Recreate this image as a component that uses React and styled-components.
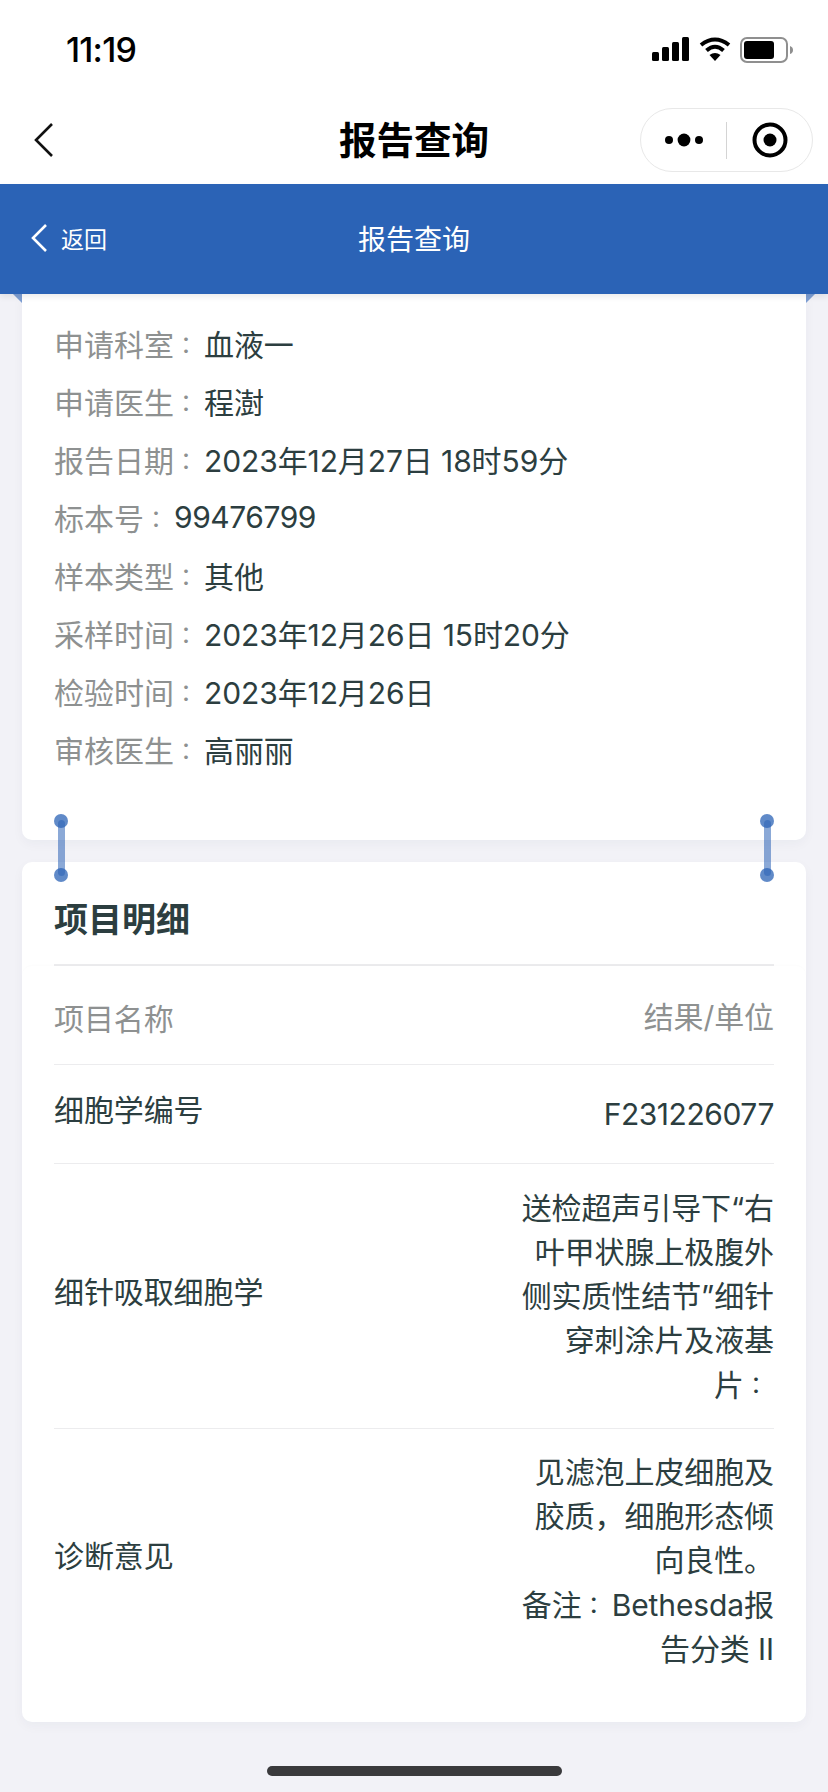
import React from "react";
import styled, { createGlobalStyle } from "styled-components";

const Global = createGlobalStyle`
  html, body { margin: 0; padding: 0; background: #f2f2f7; }
  * { box-sizing: border-box; }
  body { font-family: "Inter", "Noto Sans CJK SC", sans-serif; }
`;
const Page = styled.div`
  width: 828px; height: 1792px; overflow: hidden; position: relative;
  background: #f2f2f7; display: flex; flex-direction: column;
`;
const StatusBar = styled.div`
  height: 92px; background: #fff; display: flex; align-items: flex-start;
  justify-content: space-between; padding: 29px 34px 0 66px;
`;
const Time = styled.div`
  font: 500 34px/41px "Inter", sans-serif; color: #000; letter-spacing: -0.8px;
`;
const StatusIcons = styled.div` display: flex; align-items: flex-start; gap: 9px; padding-top: 8px; `;
const NavBar = styled.div`
  height: 92px; background: #fff; display: flex; align-items: center; justify-content: center; position: relative;
`;
const NavBack = styled.svg` position: absolute; left: 34px; top: 31px; `;
const NavTitle = styled.div`
  font: 700 37.5px/44px "Noto Sans CJK SC", sans-serif; color: #000;
`;
const Capsule = styled.div`
  position: absolute; left: 640px; top: 16px; width: 173px; height: 64px;
  display: flex; align-items: center; border: 1px solid #e8e8e8; border-radius: 32px; background: #fff;
`;
const CapsuleSide = styled.div` flex: 1; display: flex; align-items: center; justify-content: center; `;
const CapsuleDivider = styled.div` width: 1px; height: 37px; background: #d4d4d4; `;
const BlueBar = styled.div`
  height: 110px; background: #2b63b6; display: flex; align-items: center; justify-content: center;
  position: relative; z-index: 2; color: #fff; box-shadow: 0 3px 6px rgba(0,0,0,.08);
`;
const BackLink = styled.div`
  position: absolute; left: 31px; top: 0; bottom: 2px; display: flex; align-items: center; gap: 14px;
  font: 400 23px/30px "Noto Sans CJK SC", sans-serif;
`;
const BlueTitle = styled.div` font: 400 28px/36px "Noto Sans CJK SC", sans-serif; margin-bottom: 2px; `;
const Content = styled.div`
  padding: 0 22px; display: flex; flex-direction: column; gap: 22px; position: relative; flex: 1;
`;
const Card = styled.div`
  background: #fff; border-radius: ${p => p.$top ? "0 0 10px 10px" : "10px"};
  box-shadow: 0 4px 12px rgba(30,40,80,.04); position: relative;
  height: ${p => p.$h}px;
`;
const InfoList = styled.div` padding: 20px 32px 0; display: flex; flex-direction: column; `;
const InfoRow = styled.div`
  height: 58px; display: flex; align-items: center; font-size: 30px; letter-spacing: -0.1px; color: #2c3e40;
`;
const InfoLabel = styled.span` color: #8e9191; letter-spacing: 0; `;
const Colon = styled.span`
  font-family: "Noto Sans CJK TC", sans-serif; font-size: 24px; letter-spacing: 0; width: 30px;
  display: inline-block; text-align: left; vertical-align: 2px;
`;
const Digits = styled.span` letter-spacing: -0.45px; `;
const NoBreak = styled.span` white-space: nowrap; `;
const CornerTri = styled.div`
  position: absolute; top: 0; width: 9px; height: 9px; background: #7d9ed3;
  ${p => p.$right ? "left: 784px; clip-path: polygon(0 0, 100% 0, 0 100%);" : "left: -9px; clip-path: polygon(0 0, 100% 0, 100% 100%);"}
`;
const Connector = styled.div`
  position: absolute; top: 520px; width: 14px; height: 68px; z-index: 3;
  ${p => p.$right ? "right: 54px;" : "left: 54px;"}
  &::before { content: ""; position: absolute; left: 3.5px; top: 6px; width: 7px; height: 56px; border-radius: 3.5px; background: rgba(43,99,182,.55); }
`;
const Dot = styled.span`
  position: absolute; left: 0; ${p => p.$bottom ? "bottom: 0;" : "top: 0;"}
  width: 14px; height: 14px; border-radius: 50%; background: rgba(43,99,182,.75);
`;
const DetailHead = styled.div`
  margin: 0 32px; height: 104px; padding-top: 33px; border-bottom: 2px solid #ececee;
  font: 700 34px/46px "Noto Sans CJK SC", sans-serif; color: #2c3e40;
`;
const DetailBody = styled.div`
  border-radius: 10px; background: #fff; box-shadow: 0 -1px 2px rgba(30,40,80,.015);
`;
const DetailRow = styled.div`
  margin: 0 32px; display: flex; justify-content: space-between; align-items: center;
  min-height: ${p => p.$h}px; padding-top: ${p => p.$muted ? "4px" : "0"};
  border-bottom: ${p => p.$last ? "none" : "1px solid #ececee"};
  font-size: 30px; letter-spacing: -0.1px; color: ${p => p.$muted ? "#8e9191" : "#2c3e40"};
`;
const Name = styled.div` flex: none; margin-bottom: ${p => p.$lift ? 12 : 0}px; `;
const Value = styled.div` width: 260px; text-align: right; line-height: 44px; `;
const HomeBar = styled.div`
  position: absolute; left: 267px; top: 1766px; width: 295px; height: 10px; border-radius: 5px; background: #3a3a3c; z-index: 4;
`;

const Info = [
  ["申请科室", "血液一"], ["申请医生", "程澍"], ["报告日期", "2023年12月27日 18时59分"],
  ["标本号", "99476799"], ["样本类型", "其他"], ["采样时间", "2023年12月26日 15时20分"],
  ["检验时间", "2023年12月26日"], ["审核医生", "高丽丽"],
];

export default function App() {
  return (
    <Page>
      <Global />
      <StatusBar>
        <Time>11:19</Time>
        <StatusIcons>
          <svg width="38" height="24" viewBox="0 0 38 24">
            <rect x="0" y="15" width="7" height="9" rx="1.5" /><rect x="10" y="10" width="7" height="14" rx="1.5" />
            <rect x="20" y="5" width="7" height="19" rx="1.5" /><rect x="30" y="0" width="7" height="24" rx="1.5" />
          </svg>
          <svg width="32" height="24" viewBox="0 0 32 24" fill="none" stroke="#000" strokeWidth="4">
            <path d="M2 8 Q16 -3 30 8" /><path d="M7.5 13.5 Q16 6 24.5 13.5" />
            <path d="M16 24 L10.5 18 Q16 14 21.5 18 Z" fill="#000" stroke="none" />
          </svg>
          <svg width="54" height="26" viewBox="0 0 54 26">
            <rect x="1" y="1" width="46" height="24" rx="6" fill="none" stroke="#8f8f8f" strokeWidth="2" />
            <rect x="4" y="4" width="30" height="18" rx="3" fill="#000" />
            <path d="M50 9 Q53 10 53 13 Q53 16 50 17 Z" fill="#8f8f8f" />
          </svg>
        </StatusIcons>
      </StatusBar>
      <NavBar>
        <NavBack width="19" height="34" viewBox="0 0 19 34" fill="none" stroke="#111" strokeWidth="2.6">
          <path d="M18 1 L2 17 L18 33" />
        </NavBack>
        <NavTitle>报告查询</NavTitle>
        <Capsule>
          <CapsuleSide>
            <svg width="38" height="14" viewBox="0 0 38 14">
              <circle cx="4" cy="7" r="4" /><circle cx="19" cy="7" r="6.4" /><circle cx="34" cy="7" r="4" />
            </svg>
          </CapsuleSide>
          <CapsuleDivider />
          <CapsuleSide>
            <svg width="36" height="36" viewBox="0 0 36 36">
              <circle cx="18" cy="18" r="15.5" fill="none" stroke="#000" strokeWidth="4" /><circle cx="18" cy="18" r="6.5" />
            </svg>
          </CapsuleSide>
        </Capsule>
      </NavBar>
      <BlueBar>
        <BackLink>
          <svg width="16" height="28" viewBox="0 0 16 28" fill="none" stroke="#fff" strokeWidth="2.6"><path d="M15 1 L2 14 L15 27" /></svg>
          返回
        </BackLink>
        <BlueTitle>报告查询</BlueTitle>
      </BlueBar>
      <Content>
        <Card $top $h={546}>
          <CornerTri />
          <CornerTri $right />
          <InfoList>
            {Info.map(([l, v]) => (
              <InfoRow key={l}>
                <InfoLabel>{l}<Colon>：</Colon></InfoLabel>
                {/^\d+$/.test(v) ? <Digits>{v}</Digits> : v}
              </InfoRow>
            ))}
          </InfoList>
        </Card>
        <Connector><Dot /><Dot $bottom /></Connector>
        <Connector $right><Dot /><Dot $bottom /></Connector>
        <Card $h={860}>
          <DetailHead>项目明细</DetailHead>
          <DetailBody>
            <DetailRow $muted $h={99}><Name>项目名称</Name><Value>结果/单位</Value></DetailRow>
            <DetailRow $h={99}><Name $lift>细胞学编号</Name><Value><Digits>F231226077</Digits></Value></DetailRow>
            <DetailRow $h={265}><Name $lift>细针吸取细胞学</Name><Value>送检超声引导下“右叶甲状腺上极腹外侧实质性结节”细针穿刺涂片及液基<NoBreak>片<Colon>：</Colon></NoBreak></Value></DetailRow>
            <DetailRow $last $h={262}><Name $lift>诊断意见</Name><Value>见滤泡上皮细胞及胶质，细胞形态倾向良性。<br />备注<Colon>：</Colon>Bethesda报告分类 II</Value></DetailRow>
          </DetailBody>
        </Card>
      </Content>
      <HomeBar />
    </Page>
  );
}
